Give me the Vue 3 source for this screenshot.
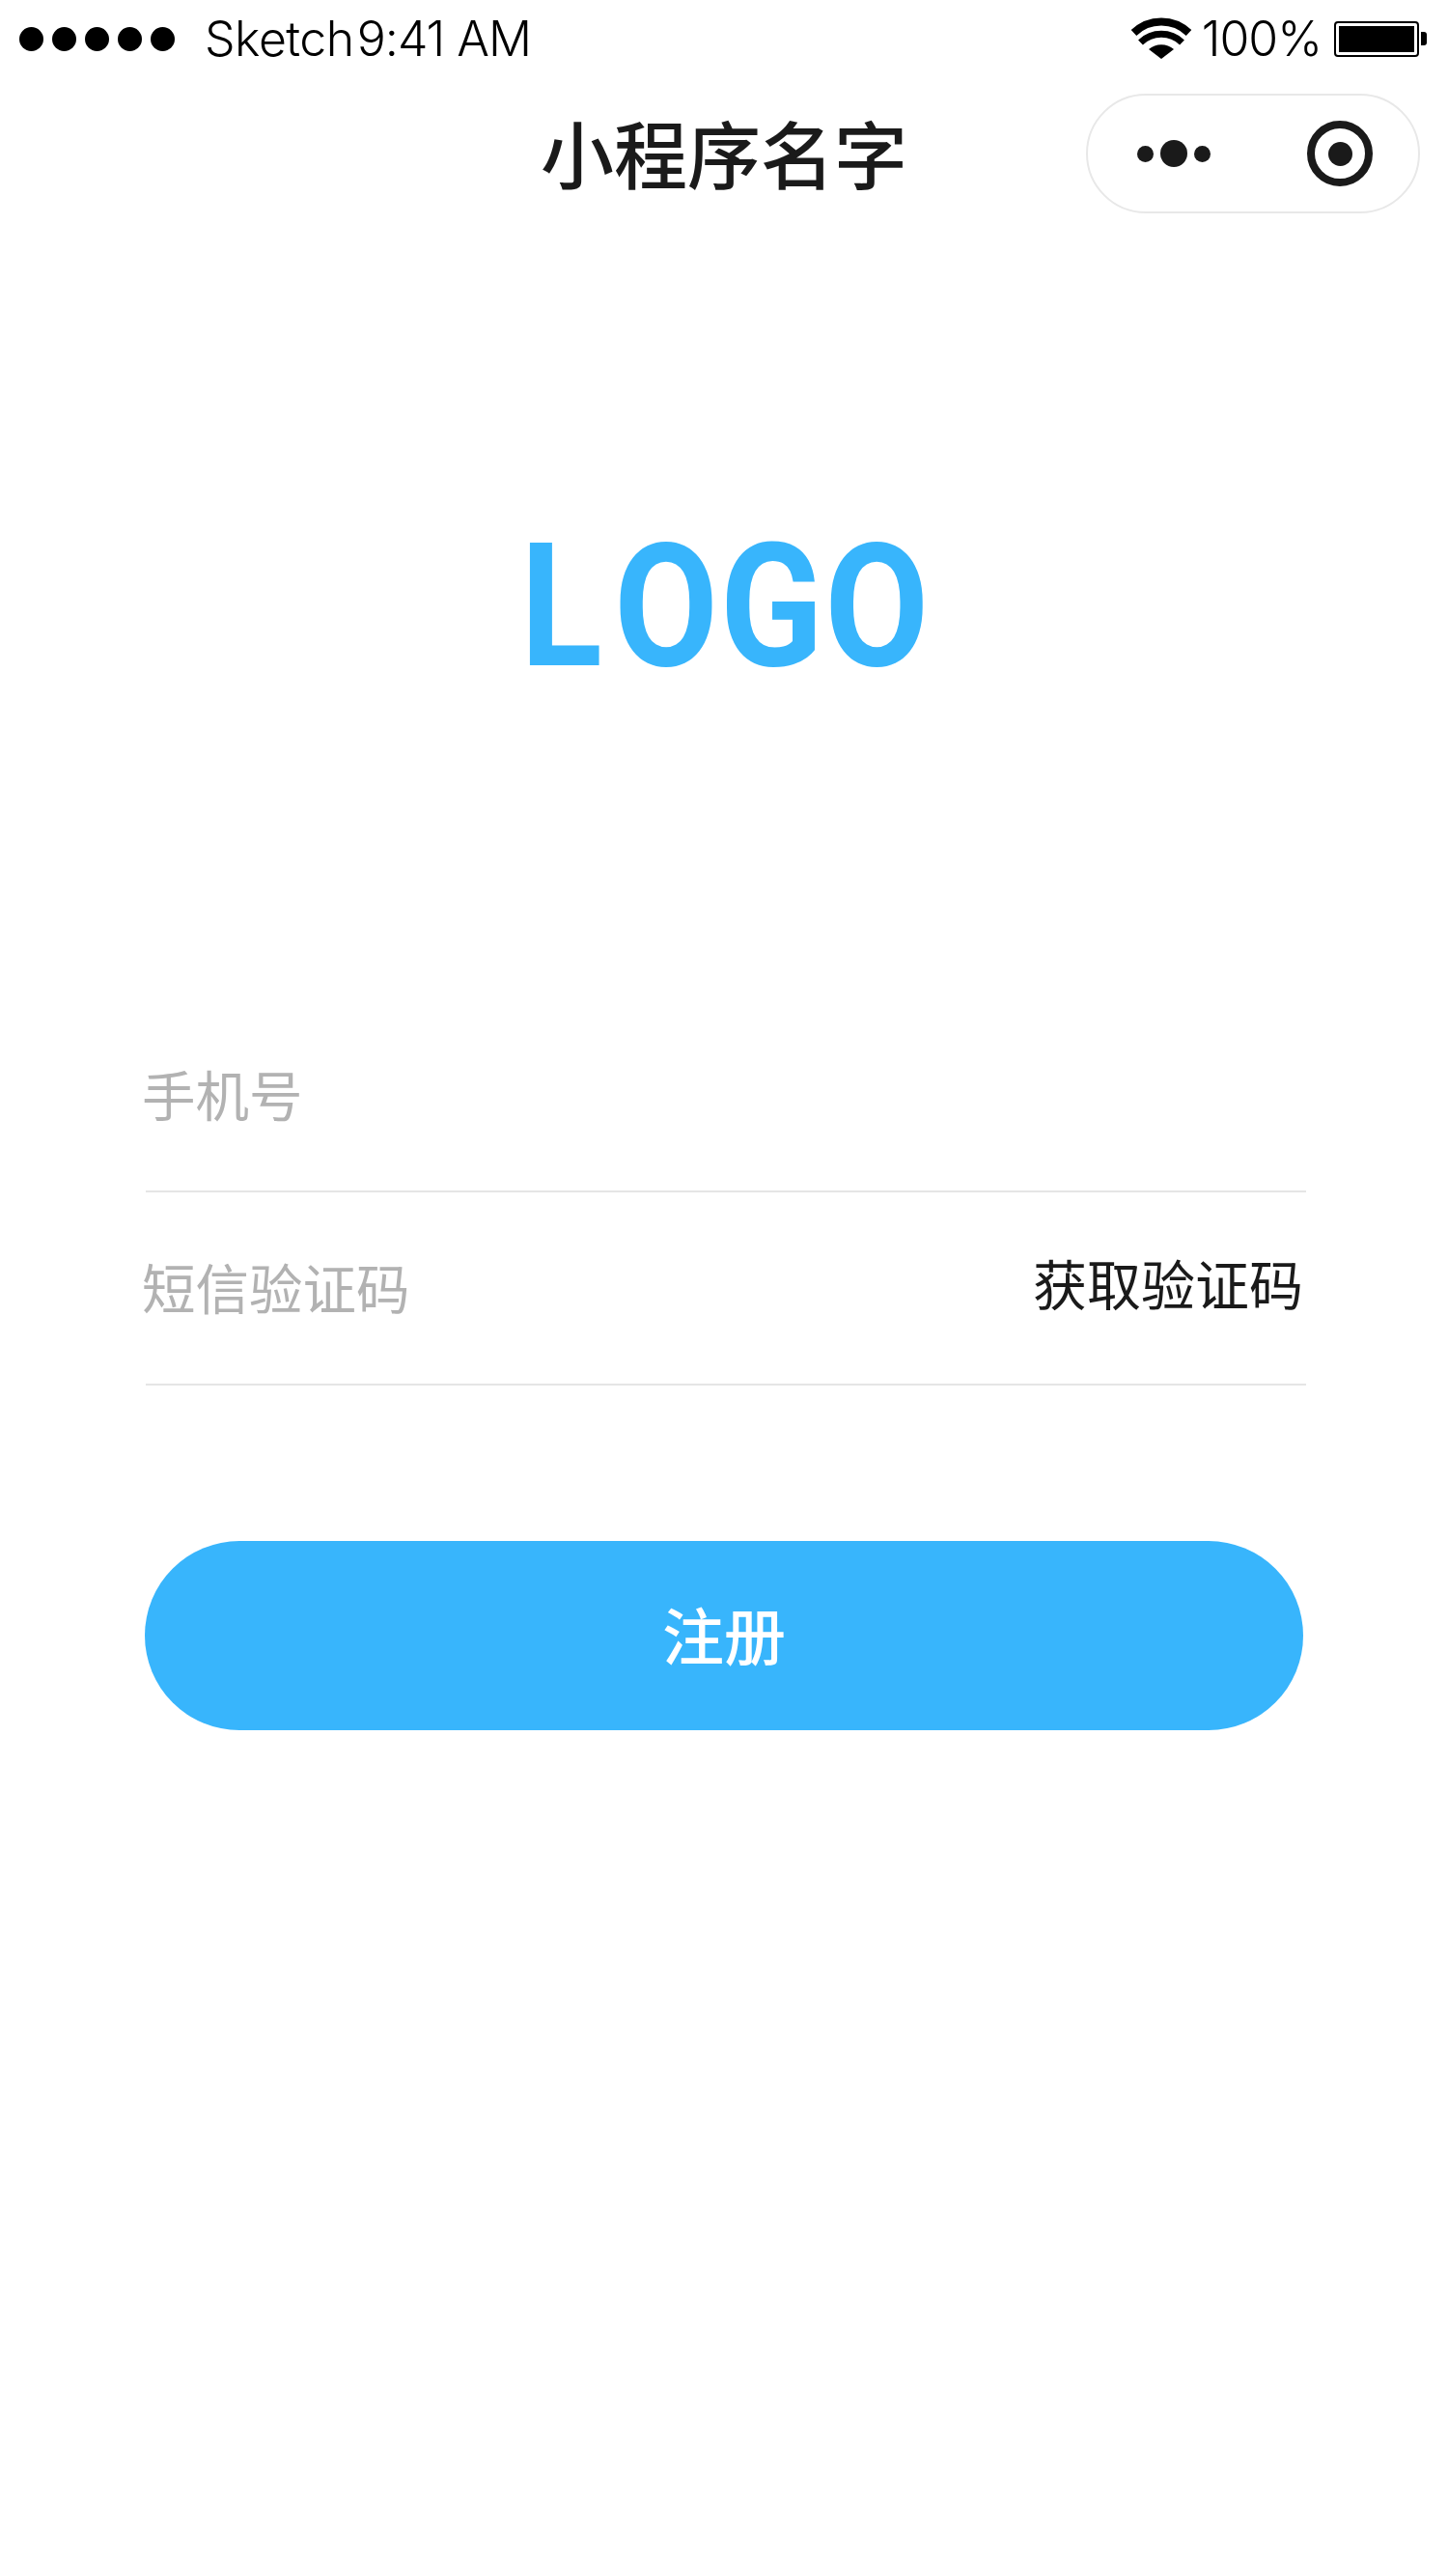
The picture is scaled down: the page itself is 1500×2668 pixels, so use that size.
<template>
  <div class="page">
    <div class="status-bar">
      <div class="signal">
        <span v-for="n in 5" :key="n" class="dot"></span>
      </div>
      <span class="carrier">Sketch</span>
      <span class="time">9:41 AM</span>
      <div class="status-right">
        <svg class="wifi" width="66" height="44" viewBox="0 0 66 44">
          <path d="M4.5 16 A41 41 0 0 1 61.5 16" fill="none" stroke="#000" stroke-width="8" />
          <path d="M11.5 26 A31 31 0 0 1 54.5 26" fill="none" stroke="#000" stroke-width="7" />
          <path d="M33 43 L20 33 A20 20 0 0 1 46 33 Z" fill="#000" />
        </svg>
        <span class="percent">100%</span>
        <div class="battery">
          <div class="battery-level"></div>
        </div>
        <div class="battery-tip"></div>
      </div>
    </div>

    <div class="nav-bar">
      <span class="nav-title">小程序名字</span>
      <div class="capsule">
        <div class="more">
          <span class="more-small"></span>
          <span class="more-big"></span>
          <span class="more-small"></span>
        </div>
        <div class="target">
          <span class="target-core"></span>
        </div>
      </div>
    </div>

    <div class="logo-wrap">
      <span class="logo"><span class="logo-l">L</span>OGO</span>
    </div>

    <div class="form">
      <div class="row">
        <span class="placeholder">手机号</span>
      </div>
      <div class="row">
        <span class="placeholder">短信验证码</span>
        <span class="get-code">获取验证码</span>
      </div>
    </div>

    <div class="submit">
      <span class="submit-text">注册</span>
    </div>
  </div>
</template>

<script setup>
</script>

<style>
html, body {
  margin: 0;
  background: #fff;
}
</style>

<style scoped>
.page {
  width: 1500px;
  height: 2668px;
  background: #fff;
  font-family: "Liberation Sans", "Noto Sans CJK SC", sans-serif;
  overflow: hidden;
}

.status-bar {
  height: 80px;
  display: flex;
  align-items: center;
  padding-left: 20px;
  color: #000;
}

.signal {
  display: flex;
  gap: 9px;
  margin-right: 31px;
}

.dot {
  width: 25px;
  height: 25px;
  border-radius: 50%;
  background: #000;
}

.carrier,
.time,
.percent {
  font-family: Inter, "Liberation Sans", sans-serif;
  font-weight: 300;
  font-size: 50px;
  line-height: 80px;
  letter-spacing: -1px;
}

.carrier {
  letter-spacing: -0.5px;
}

.time {
  margin-left: 3px;
}

.status-right {
  margin-left: auto;
  display: flex;
  align-items: center;
  padding-right: 22px;
}

.wifi {
  margin-right: 9px;
}

.percent {
  margin-right: 13px;
}

.battery {
  width: 88px;
  height: 37px;
  box-sizing: border-box;
  border: 2px solid #000;
  border-radius: 4px;
  padding: 3px;
}

.battery-level {
  height: 100%;
  background: #000;
}

.battery-tip {
  width: 6px;
  height: 14px;
  margin-left: 2px;
  background: #000;
  border-radius: 0 3px 3px 0;
}

.nav-bar {
  position: relative;
  height: 160px;
  display: flex;
  align-items: center;
  justify-content: center;
}

.nav-title {
  font-family: "Noto Sans CJK SC", sans-serif;
  font-size: 76px;
  font-weight: 500;
  color: #1a1a1a;
  margin-top: -6px;
}

.capsule {
  position: absolute;
  left: 1125px;
  top: 17px;
  width: 346px;
  height: 124px;
  box-sizing: border-box;
  border: 2px solid #e8e8e8;
  border-radius: 62px;
  display: flex;
  align-items: center;
}

.more {
  display: flex;
  align-items: center;
  gap: 7px;
  margin-left: 51px;
}

.more-small {
  width: 17px;
  height: 17px;
  border-radius: 50%;
  background: #1a1a1a;
}

.more-big {
  width: 28px;
  height: 28px;
  border-radius: 50%;
  background: #1a1a1a;
}

.target {
  width: 68px;
  height: 68px;
  box-sizing: border-box;
  border: 8px solid #1a1a1a;
  border-radius: 50%;
  margin-left: 100px;
  display: flex;
  align-items: center;
  justify-content: center;
}

.target-core {
  width: 25px;
  height: 25px;
  border-radius: 50%;
  background: #1a1a1a;
}

.logo-wrap {
  height: 380px;
  margin-top: 198px;
  display: flex;
  justify-content: center;
  align-items: center;
}

.logo {
  font-family: Roboto, sans-serif;
  font-weight: 700;
  font-size: 178px;
  line-height: 1;
  letter-spacing: 2px;
  margin-left: 4px;
  color: #38b5fc;
  transform: scaleX(0.88);
}

.logo-l {
  letter-spacing: 14px;
}

.form {
  margin: 217px 147px 0 151px;
}

.row {
  height: 198px;
  border-bottom: 2px solid #e5e5e5;
  display: flex;
  align-items: center;
  justify-content: space-between;
  font-family: "Noto Sans CJK SC", sans-serif;
  font-size: 56px;
}

.placeholder {
  margin-left: -4px;
  margin-top: -4px;
  font-size: 55.5px;
  color: #b2b2b2;
}

.get-code {
  margin-right: 3px;
  margin-bottom: 14px;
  color: #1a1a1a;
}

.submit {
  width: 1200px;
  height: 196px;
  margin: 161px 0 0 150px;
  border-radius: 98px;
  background: #38b5fc;
  display: flex;
  align-items: center;
  justify-content: center;
  color: #fff;
  font-family: "Noto Sans CJK SC", sans-serif;
  font-size: 64px;
  font-weight: 500;
}

.submit-text {
  margin-bottom: 6px;
}
</style>
